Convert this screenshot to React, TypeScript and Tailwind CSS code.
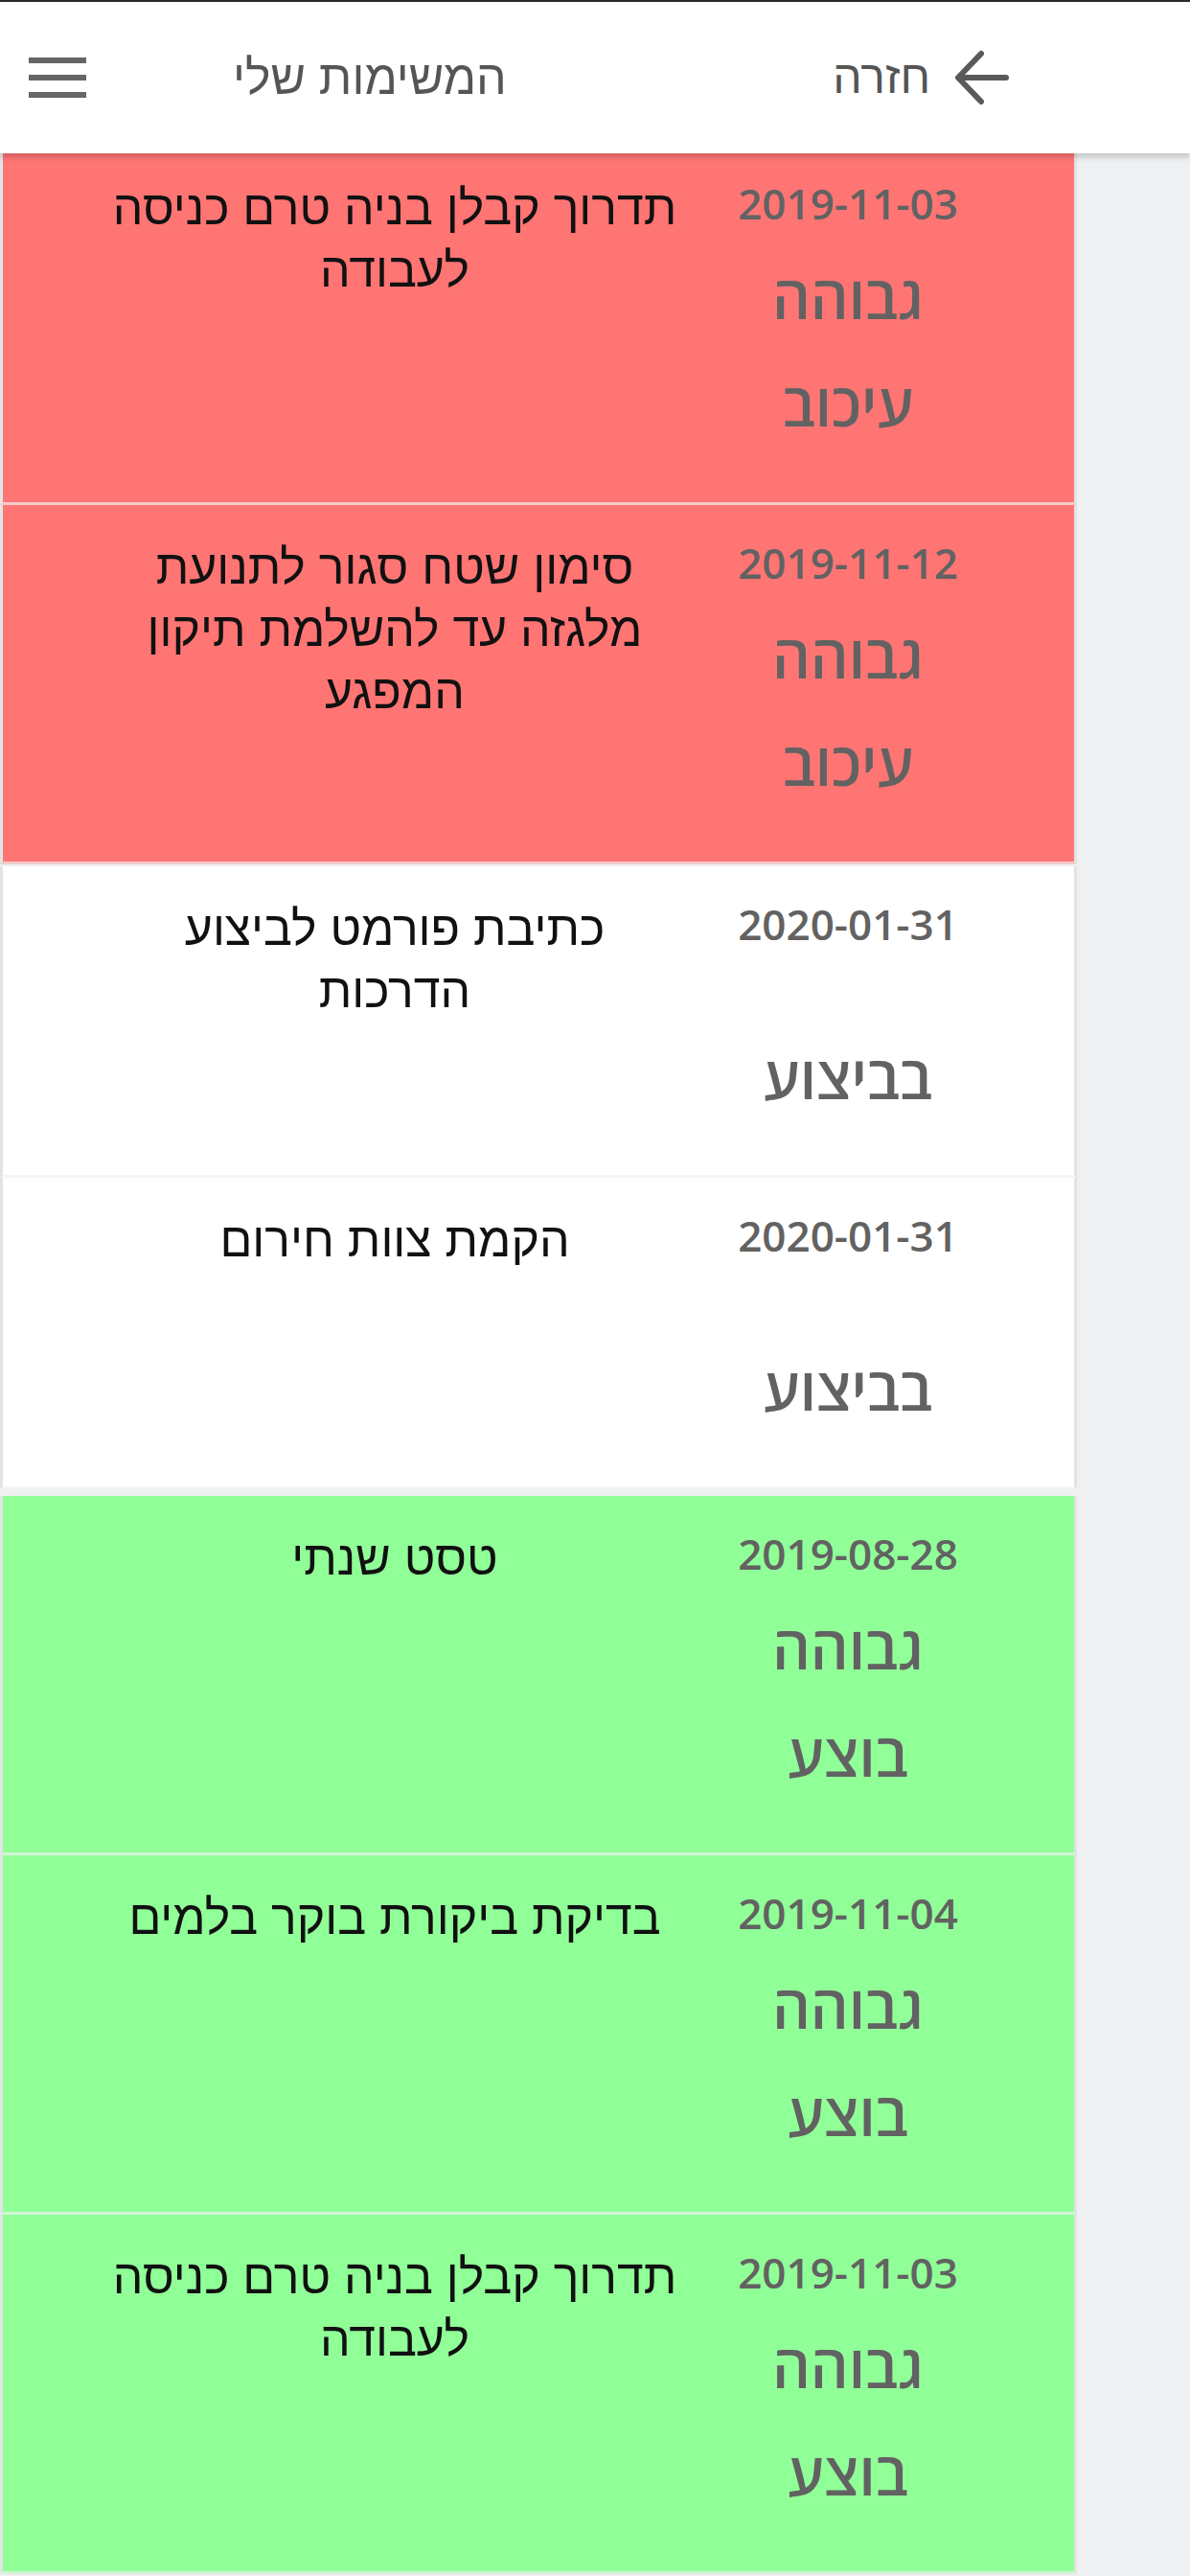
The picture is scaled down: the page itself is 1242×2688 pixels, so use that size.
import React from "react";

type Task = {
  date: string;
  title: string[];
  priority?: string;
  status: string;
  tone: "red" | "white" | "green";
};

const tasks: Task[] = [
  { date: "2019-11-03", title: ["תדרוך קבלן בניה טרם כניסה", "לעבודה"], priority: "גבוהה", status: "עיכוב", tone: "red" },
  { date: "2019-11-12", title: ["סימון שטח סגור לתנועת", "מלגזה עד להשלמת תיקון", "המפגע"], priority: "גבוהה", status: "עיכוב", tone: "red" },
  { date: "2020-01-31", title: ["כתיבת פורמט לביצוע", "הדרכות"], status: "בביצוע", tone: "white" },
  { date: "2020-01-31", title: ["הקמת צוות חירום"], status: "בביצוע", tone: "white" },
  { date: "2019-08-28", title: ["טסט שנתי"], priority: "גבוהה", status: "בוצע", tone: "green" },
  { date: "2019-11-04", title: ["בדיקת ביקורת בוקר בלמים"], priority: "גבוהה", status: "בוצע", tone: "green" },
  { date: "2019-11-03", title: ["תדרוך קבלן בניה טרם כניסה", "לעבודה"], priority: "גבוהה", status: "בוצע", tone: "green" },
];

const font = { fontFamily: '"Liberation Sans", "DejaVu Sans", sans-serif' };
const roundFont = { fontFamily: '"Open Sans", "Liberation Sans", sans-serif' };

function Card({ t }: { t: Task }) {
  const bg =
    t.tone === "red" ? "bg-[#ff7574]" : t.tone === "green" ? "bg-[#91ff98]" : "bg-white";
  return (
    <div
      dir="rtl"
      className={`${bg} flex flex-row border-x-[3px] border-x-[#e3e3e3] border-b-[3px] border-b-[#f0f0f0]/70`}
    >
      <div
        className="w-[300px] mr-[86px] flex flex-col items-center pt-[30px] pb-[47px] text-[#626262] font-semibold"
        style={roundFont}
      >
        <div dir="ltr" className="text-[44px] leading-[60px]">
          {t.date}
        </div>
        {t.priority ? (
          <>
            <div className="mt-[11px] text-[62px] leading-[112px]">{t.priority}</div>
            <div className="text-[62px] leading-[112px]">{t.status}</div>
          </>
        ) : (
          <div className="mt-[73px] text-[62px] leading-[112px]">{t.status}</div>
        )}
      </div>
      <div className="w-[646px] flex flex-col items-center pt-[33px] text-[#111]">
        {t.title.map((l, i) => (
          <div key={i} className="text-[50px] leading-[65px] whitespace-nowrap">
            {l}
          </div>
        ))}
      </div>
    </div>
  );
}

export default function App() {
  const red = tasks.filter((t) => t.tone === "red");
  const white = tasks.filter((t) => t.tone === "white");
  const green = tasks.filter((t) => t.tone === "green");
  return (
    <div className="w-[1242px] min-h-[2688px] bg-[#eff0f2]" style={font}>
      <div className="h-[2px] bg-[#2a2a2a]" />
      <header className="relative z-10 h-[158px] bg-white flex flex-row items-center justify-between shadow-[0_4px_6px_rgba(0,0,0,0.18)]">
        <div className="flex flex-row items-center">
          <div className="ml-[30px] w-[60px] flex flex-col gap-[12px]">
            <div className="h-[6px] bg-[#666]" />
            <div className="h-[6px] bg-[#666]" />
            <div className="h-[6px] bg-[#666]" />
          </div>
          <div className="ml-[153px] text-[50px] text-[#555]" dir="rtl">
            המשימות שלי
          </div>
        </div>
        <div className="flex flex-row items-center mr-[189px]">
          <div className="text-[48px] text-[#555]" dir="rtl">
            חזרה
          </div>
          <svg width="58" height="60" viewBox="0 0 58 60" className="ml-[24px]">
            <path
              d="M55 30 H6 M29 5 L5 30 L29 55"
              fill="none"
              stroke="#5a5a5a"
              strokeWidth="6"
              strokeLinecap="round"
              strokeLinejoin="round"
            />
          </svg>
        </div>
      </header>
      <div className="w-[1124px] -mt-[8px]">
        <div className="flex flex-col mb-[2px] bg-[#e6e6e6]">
          {red.map((t, i) => (
            <Card key={i} t={t} />
          ))}
        </div>
        <div className="flex flex-col mb-[7px] bg-[#e6e6e6]">
          {white.map((t, i) => (
            <Card key={i} t={t} />
          ))}
        </div>
        <div className="flex flex-col bg-[#e6e6e6]">
          {green.map((t, i) => (
            <Card key={i} t={t} />
          ))}
        </div>
      </div>
    </div>
  );
}
